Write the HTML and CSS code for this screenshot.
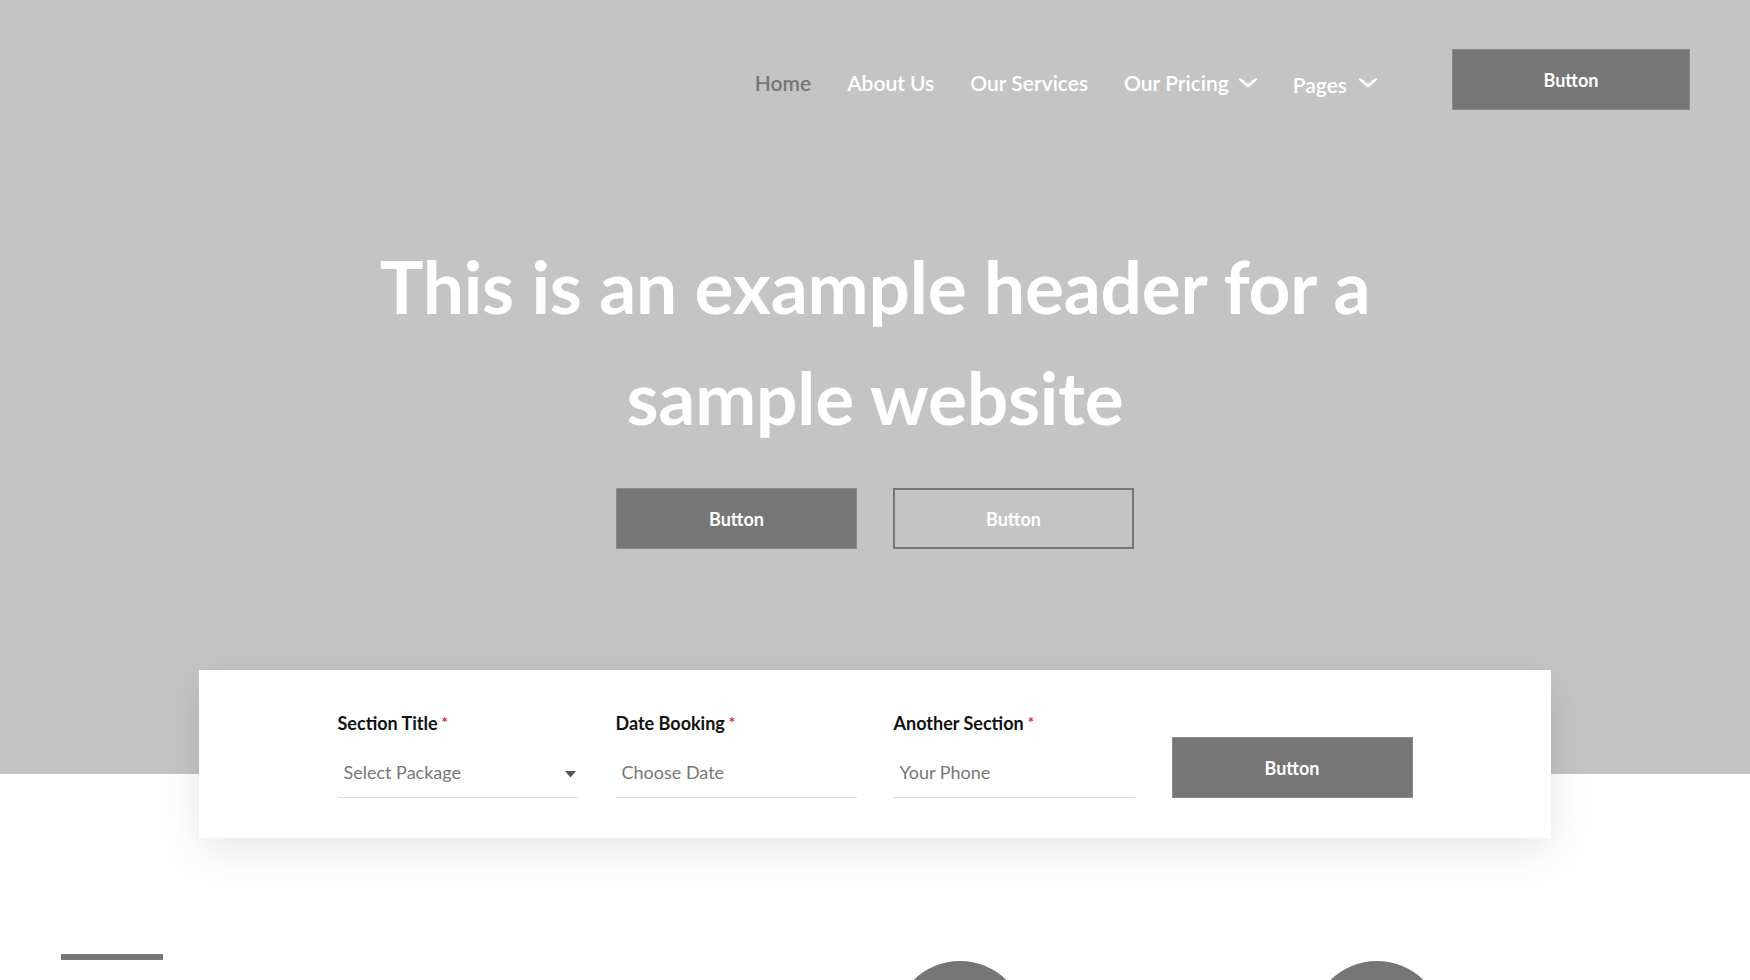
FILE: index.html
```html
<!DOCTYPE html>
<html lang="en">
<head>
<meta charset="utf-8">
<title>Sample website</title>
<link rel="stylesheet" href="styles.css">
</head>
<body>
  <section class="hero">
    <header class="topbar">
      <nav class="nav">
        <a class="nav-link active" href="#">Home</a>
        <a class="nav-link" href="#">About Us</a>
        <a class="nav-link" href="#">Our Services</a>
        <a class="nav-link dropdown" href="#">Our Pricing
          <svg class="chev" width="18" height="10" viewBox="0 0 18 10"><path d="M1.5 1.5 L9 8 L16.5 1.5" fill="none" stroke="#fff" stroke-width="2.8" stroke-linecap="round" stroke-linejoin="round"/></svg>
        </a>
        <a class="nav-link dropdown pages" href="#"><span class="pages-text">Pages</span>
          <svg class="chev" width="18" height="10" viewBox="0 0 18 10"><path d="M1.5 1.5 L9 8 L16.5 1.5" fill="none" stroke="#fff" stroke-width="2.8" stroke-linecap="round" stroke-linejoin="round"/></svg>
        </a>
      </nav>
      <a class="btn btn-solid btn-header" href="#">Button</a>
    </header>

    <h1 class="hero-title">This is an example header for a<br>sample website</h1>

    <div class="hero-actions">
      <a class="btn btn-solid" href="#">Button</a>
      <a class="btn btn-outline" href="#">Button</a>
    </div>
  </section>

  <section class="booking-wrap">
    <form class="booking">
      <div class="field">
        <label class="label">Section Title<span class="req">*</span></label>
        <div class="select">
          <span>Select Package</span>
          <svg width="11" height="7" viewBox="0 0 11 7"><path d="M0 0 H11 L5.5 6.5 Z" fill="#555"/></svg>
        </div>
      </div>
      <div class="field">
        <label class="label">Date Booking<span class="req">*</span></label>
        <input class="input" type="text" placeholder="Choose Date">
      </div>
      <div class="field">
        <label class="label">Another Section<span class="req">*</span></label>
        <input class="input" type="text" placeholder="Your Phone">
      </div>
      <div class="field field-btn">
        <button class="btn btn-solid btn-submit" type="button">Button</button>
      </div>
    </form>
  </section>

  <section class="features">
    <div class="intro">
      <div class="bar"></div>
    </div>
    <div class="feature"><div class="circle"></div></div>
    <div class="feature"><div class="circle"></div></div>
  </section>
</body>
</html>
```

FILE: styles.css
```css
* { box-sizing: border-box; }

html, body {
  margin: 0;
  padding: 0;
}

body {
  font-family: Lato, "Open Sans", "Liberation Sans", sans-serif;
  background: #ffffff;
  color: #111;
  overflow: hidden;
}

a { text-decoration: none; }

.hero {
  background: #c4c4c4;
  padding: 49px 60px 225px;
}

.topbar {
  display: flex;
  justify-content: flex-end;
  align-items: center;
  height: 61px;
}

.nav {
  display: flex;
  align-items: center;
  gap: 36px;
  margin-right: 75px;
  padding-top: 7px;
}

.nav-link {
  font-size: 21px;
  font-weight: 600;
  color: #ffffff;
  line-height: 24px;
  display: flex;
  align-items: center;
}

.nav-link.active {
  color: #767676;
}

.dropdown .chev {
  margin-left: 10px;
}

.pages .pages-text {
  padding-top: 4px;
  margin-right: 2px;
}

.btn {
  display: inline-flex;
  align-items: center;
  justify-content: center;
  font-family: Lato, "Liberation Sans", sans-serif;
  font-size: 18px;
  font-weight: 700;
  color: #ffffff;
  height: 61px;
  width: 241px;
  border: none;
  cursor: pointer;
}

.btn-solid {
  background: #767676;
  border: 1px solid #8a8a8a;
}

.btn-outline {
  background: transparent;
  border: 2px solid #767676;
}

.btn-header {
  width: 238px;
}

.hero-title {
  margin: 121px 0 0;
  text-align: center;
  color: #ffffff;
  font-size: 73px;
  font-weight: 700;
  line-height: 111px;
  letter-spacing: -0.2px;
}

.hero-actions {
  display: flex;
  justify-content: center;
  gap: 36px;
  margin-top: 35px;
}

.booking-wrap {
  display: flex;
  justify-content: center;
  margin-top: -104px;
}

.booking {
  width: 1352px;
  background: #ffffff;
  box-shadow: 0 12px 40px rgba(0, 0, 0, 0.10);
  padding: 41px 0 40px;
  display: grid;
  grid-template-columns: repeat(4, 241px);
  column-gap: 37px;
  justify-content: center;
  align-items: end;
}

.field {
  display: flex;
  flex-direction: column;
}

.label {
  font-size: 18px;
  font-weight: 700;
  line-height: 22px;
  color: #111111;
  margin-bottom: 16px;
}

.req {
  color: #e8232a;
  font-size: 15px;
  margin-left: 4px;
  vertical-align: 2px;
}

.input,
.select {
  height: 48px;
  border: none;
  border-bottom: 1px solid #dedede;
  padding: 0 0 4px 6px;
  font-family: Lato, "Liberation Sans", sans-serif;
  font-size: 18px;
  color: #777777;
  background: transparent;
  outline: none;
  width: 100%;
}

.input::placeholder {
  color: #777777;
}

.select {
  display: flex;
  align-items: center;
  justify-content: space-between;
  padding-right: 3px;
}

.select svg {
  margin-top: 6px;
}

.btn-submit {
  width: 100%;
}

.features {
  display: grid;
  grid-template-columns: 690px 417px 417px;
  padding: 0 0 0 61px;
  margin-top: 116px;
}

.bar {
  width: 102px;
  height: 6px;
  background: #767676;
}

.feature {
  display: flex;
  justify-content: center;
  padding-top: 7px;
}

.circle {
  width: 132px;
  height: 132px;
  border-radius: 50%;
  background: #767676;
}
```
